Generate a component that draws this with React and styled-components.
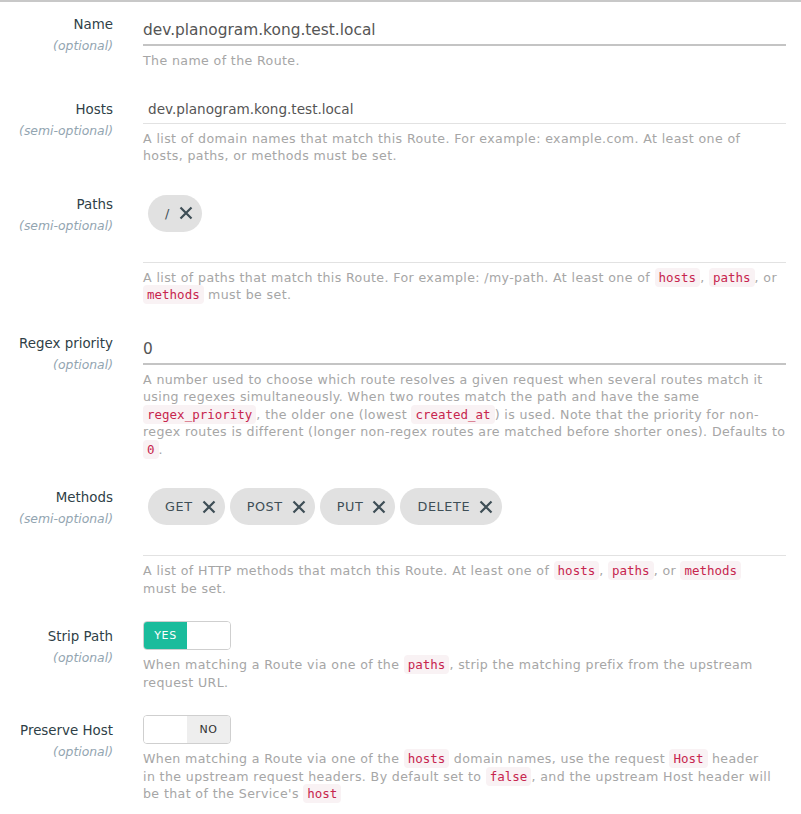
import React from 'react';
import styled, { createGlobalStyle } from 'styled-components';

const GlobalStyle = createGlobalStyle`
  html, body {
    margin: 0;
    padding: 0;
    background: #fff;
  }
  body {
    font-family: "DejaVu Sans", "Open Sans", sans-serif;
  }
`;

const Page = styled.div`
  border-top: 2px solid #c8c8c8;
  padding: 14px 15px 0 0;
  width: 801px;
  box-sizing: border-box;
`;

const Field = styled.div`
  display: grid;
  grid-template-columns: 113px 1fr;
  column-gap: 30px;
  margin-bottom: 31px;
`;

const LabelCol = styled.div`
  text-align: right;
`;

const Label = styled.div`
  font-size: 13.4px;
  line-height: 18px;
  color: #2f3f47;
  white-space: nowrap;
`;

const SubLabel = styled.div`
  margin-top: 3px;
  font-size: 12.4px;
  line-height: 18px;
  font-style: italic;
  color: #93a5b1;
  white-space: nowrap;
`;

const Control = styled.div`
  min-width: 0;
`;

const Input = styled.div`
  box-sizing: border-box;
  height: ${p => (p.$small ? '23px' : '30px')};
  padding: ${p => (p.$small ? '0 0 0 5px' : '4px 0 0')};
  font-size: ${p => (p.$small ? '13.6px' : '15.4px')};
  line-height: ${p => (p.$small ? '16px' : '20px')};
  color: #555;
  border-bottom: ${p => (p.$small ? '1px solid #e2e2e2' : '2px solid #c4c4c4')};
`;

const ChipBox = styled.div`
  display: flex;
  gap: 5px;
  padding: 0 0 30px 5px;
  margin-top: -1px;
  border-bottom: 1px solid #e2e2e2;
`;

const Chip = styled.span`
  display: inline-flex;
  align-items: center;
  gap: 9px;
  height: 37px;
  padding: 0 9px 0 17px;
  border-radius: 19px;
  background: #e1e1e1;
  color: #3e4e56;
  font-size: 12.8px;
  letter-spacing: 0.6px;
`;

const Help = styled.div`
  margin-top: 6px;
  font-size: 12.6px;
  line-height: 17.5px;
  letter-spacing: 0.38px;
  color: #a6a6a6;
`;

const Code = styled.code`
  font-family: "DejaVu Sans Mono", "Liberation Mono", monospace;
  font-size: 12.5px;
  letter-spacing: 0;
  line-height: 1;
  padding: 2px 4px;
  border-radius: 4px;
  background: #f9f2f4;
  color: #c7254e;
`;

const Toggle = styled.div`
  display: flex;
  width: 88px;
  height: 29px;
  margin-top: -7px;
  box-sizing: border-box;
  border: 1px solid #cfcfcf;
  border-radius: 4px;
  overflow: hidden;
`;

const Half = styled.span`
  flex: 1;
  display: flex;
  align-items: center;
  justify-content: center;
  font-size: 11px;
  letter-spacing: 0.6px;
  background: ${p => (p.$on ? p.$bg : '#fff')};
  color: ${p => p.$fg};
`;

const XIcon = () => (
  <svg width="14" height="14" viewBox="0 0 14 14">
    <path d="M1.5 1.5L12.5 12.5M12.5 1.5L1.5 12.5" stroke="#3e4e56" strokeWidth="2.2" fill="none" />
  </svg>
);

const FieldLabel = ({ name, hint }) => (
  <LabelCol>
    <Label>{name}</Label>
    <SubLabel>{hint}</SubLabel>
  </LabelCol>
);

const YesNo = ({ value }) => (
  <Toggle>
    <Half $on={value} $bg="#1abc9c" $fg="#fff">{value ? 'YES' : ''}</Half>
    <Half $on={!value} $bg="#eeeeee" $fg="#333">{value ? '' : 'NO'}</Half>
  </Toggle>
);

const methods = ['GET', 'POST', 'PUT', 'DELETE'];

const App = () => (
  <Page>
    <GlobalStyle />
    <Field>
      <FieldLabel name="Name" hint="(optional)" />
      <Control>
        <Input>dev.planogram.kong.test.local</Input>
        <Help>The name of the Route.</Help>
      </Control>
    </Field>

    <Field>
      <FieldLabel name="Hosts" hint="(semi-optional)" />
      <Control>
        <Input $small>dev.planogram.kong.test.local</Input>
        <Help>
          A list of domain names that match this Route. For example: example.com. At least one of<br />
          hosts, paths, or methods must be set.
        </Help>
      </Control>
    </Field>

    <Field>
      <FieldLabel name="Paths" hint="(semi-optional)" />
      <Control>
        <ChipBox>
          <Chip>/ <XIcon /></Chip>
        </ChipBox>
        <Help>
          A list of paths that match this Route. For example: /my-path. At least one of <Code>hosts</Code>, <Code>paths</Code>, or <Code>methods</Code> must be set.
        </Help>
      </Control>
    </Field>

    <Field>
      <FieldLabel name="Regex priority" hint="(optional)" />
      <Control>
        <Input>0</Input>
        <Help>
          A number used to choose which route resolves a given request when several routes match it
          using regexes simultaneously. When two routes match the path and have the same <Code>regex_priority</Code>, the older one (lowest <Code>created_at</Code>) is used. Note that the priority for non-regex routes is different (longer non-regex routes are matched before shorter ones). Defaults to <Code>0</Code>.
        </Help>
      </Control>
    </Field>

    <Field>
      <FieldLabel name="Methods" hint="(semi-optional)" />
      <Control>
        <ChipBox>
          {methods.map(m => (
            <Chip key={m}>{m} <XIcon /></Chip>
          ))}
        </ChipBox>
        <Help>
          A list of HTTP methods that match this Route. At least one of <Code>hosts</Code>, <Code>paths</Code>, or <Code>methods</Code><br />
          must be set.
        </Help>
      </Control>
    </Field>

    <Field>
      <FieldLabel name="Strip Path" hint="(optional)" />
      <Control>
        <YesNo value />
        <Help>
          When matching a Route via one of the <Code>paths</Code>, strip the matching prefix from the upstream request URL.
        </Help>
      </Control>
    </Field>

    <Field>
      <FieldLabel name="Preserve Host" hint="(optional)" />
      <Control>
        <YesNo value={false} />
        <Help>
          When matching a Route via one of the <Code>hosts</Code> domain names, use the request <Code>Host</Code> header<br />
          in the upstream request headers. By default set to <Code>false</Code>, and the upstream Host header will be that of the Service's <Code>host</Code>
        </Help>
      </Control>
    </Field>
  </Page>
);

export default App;
